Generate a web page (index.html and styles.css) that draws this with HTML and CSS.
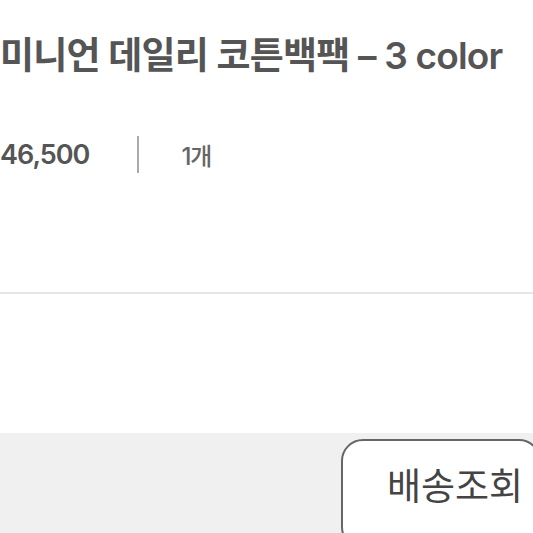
FILE: index.html
```html
<!DOCTYPE html>
<html lang="ko">
<head>
    <meta charset="UTF-8">
    <meta name="viewport" content="width=device-width, initial-scale=1.0"/>
    <title>주문 상품</title>
    <link rel="stylesheet" href="styles.css">
</head>
<body>
    <div class="item">
        <h2 class="item-name">미니언 데일리 코튼백팩 – 3 color</h2>
        <div class="item-meta">
            <span class="price">46,500</span>
            <span class="sep"></span>
            <span class="qty">1개</span>
        </div>
    </div>
    <div class="footer">
        <button class="track">배송조회</button>
    </div>
</body>
</html>
```

FILE: styles.css
```css
body { margin: 0; background: #fff; font-family: Inter, 'Noto Sans CJK KR', sans-serif; color: #555; overflow: hidden; }
.item { height: 292px; border-bottom: 2px solid #e6e6e6; margin-bottom: 139px; }
.item-name { margin: 0; padding-top: 32px; font-size: 37px; font-weight: 600; letter-spacing: -0.8px; line-height: 48px; color: #555; white-space: nowrap; }
.item-meta { display: flex; align-items: center; margin-top: 56px; }
.price { font-size: 27px; font-weight: 600; letter-spacing: -1px; color: #555; }
.sep { width: 2px; height: 37px; background: #aaa; margin: 0 42px 0 48px; }
.qty { font-size: 24px; font-weight: 500; color: #666; letter-spacing: -1px; }
.footer { background: #f0f0f0; height: 100px; display: flex; justify-content: flex-end; padding-top: 6px; box-sizing: border-box; }
.track { width: 200px; margin-right: -8px; height: 110px; background: #fff; border: 2px solid #666; border-radius: 22px; font-family: 'Noto Sans CJK KR', sans-serif; font-size: 37px; color: #444; text-align: left; padding: 0 0 20px 44px; }
```
